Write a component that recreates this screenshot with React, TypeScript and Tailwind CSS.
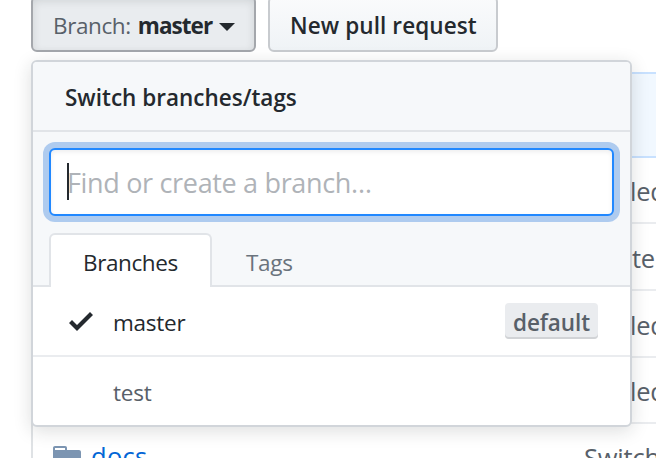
import React from "react";

const font = "font-['Open_Sans','Noto_Sans',sans-serif]";

function FileRow({ text, pad, height }: { text: string; pad: string; height: string }) {
  return (
    <div className={`flex items-center border-b-2 border-[#eaecef] pt-[3px] ${height} ${pad} text-[25.5px] tracking-[-0.3px] text-[#586069]`}>
      {text}
    </div>
  );
}

function FileTable() {
  return (
    <div className="ml-[31px] mt-[20px] w-[660px] border-l-2 border-[#dfe2e5]">
      <div className="h-[86px] border-y-2 border-[#c8e1ff] bg-[#f1f8ff]" />
      <FileRow text="led" pad="pl-[597px]" height="h-[66px]" />
      <FileRow text="te" pad="pl-[599px]" height="h-[67px]" />
      <FileRow text="led" pad="pl-[597px]" height="h-[67px]" />
      <FileRow text="led" pad="pl-[597px]" height="h-[66px]" />
      <div className="flex h-[67px] items-center pl-[20px] text-[25.5px]">
        <svg className="h-[32px] w-[28px] fill-[#7c95b2]" viewBox="0 0 14 16">
          <path d="M13 4H7V3c0-.66-.31-1-1-1H1c-.55 0-1 .45-1 1v10c0 .55.45 1 1 1h12c.55 0 1-.45 1-1V5c0-.55-.45-1-1-1zM6 4H1V3h5v1z" />
        </svg>
        <span className="ml-[10px] w-[493px] pb-[2px] tracking-[0.3px] text-[#0366d6]">docs</span>
        <span className="pb-px tracking-[-0.2px] text-[#586069]">Switch</span>
      </div>
    </div>
  );
}

function BranchMenu() {
  return (
    <div className="absolute left-[31px] top-[60px] flex h-[367px] w-[601px] flex-col overflow-visible rounded-[6px] border-2 border-[#d1d5da] bg-white text-[22.5px] text-[#24292e] shadow-[0_4px_18px_rgba(27,31,35,0.15)]">
      <div className="flex h-[70px] shrink-0 items-center rounded-t-[4px] border-b-2 border-[#e1e4e8] bg-[#f6f8fa] pl-8 pt-[3px] font-semibold">
        Switch branches/tags
      </div>
      <div className="flex h-[155px] shrink-0 flex-col border-b-2 border-[#e1e4e8] bg-[#f6f8fa] px-4 pt-4">
        <div className="flex h-[68px] w-[565px] shrink-0 items-center rounded-[6px] border-2 border-[#2188ff] bg-white pl-[16px] text-[27px] tracking-[-0.33px] text-[#afb3b8] shadow-[inset_0_2px_4px_rgba(27,31,35,0.075),0_0_0_6px_#aecbef]">
          <span className="h-[37px] w-[2px] shrink-0 -translate-y-px bg-[#24292e]" />
          <span className="-ml-[2px] whitespace-nowrap pt-[2px]">Find or create a branch…</span>
        </div>
        <div className="mt-[17px] flex h-[54px] shrink-0">
          <div className="flex w-[163px] items-center rounded-t-[6px] border-2 border-b-0 border-[#e1e4e8] bg-white pl-8 pt-[4px] tracking-[-0.4px]">
            Branches
          </div>
          <div className="flex items-center pl-[34px] pt-[6px] tracking-[-0.3px] text-[#6a737d]">Tags</div>
        </div>
      </div>
      <div className="flex h-[70px] shrink-0 items-center border-b-2 border-[#eaecef] pl-[36px] pr-8">
        <svg className="h-8 w-6 fill-[#24292e]" viewBox="0 0 12 16">
          <path d="M12 5l-8 8-4-4 1.5-1.5L4 10l6.5-6.5L12 5z" />
        </svg>
        <span className="ml-5 grow pt-[4px] tracking-[-0.25px]">master</span>
        <span className="flex h-[36px] w-[93px] items-center justify-center rounded-[4px] bg-[#eaecef] pt-[3px] font-semibold tracking-[-0.1px] text-[#586069] shadow-[inset_0_-2px_0_#d1d3d6]">
          default
        </span>
      </div>
      <div className="flex grow items-center pl-[80px] pt-[4px] tracking-[-0.25px] text-[#586069]">test</div>
    </div>
  );
}

export default function App() {
  return (
    <div className={`relative h-[458px] w-[656px] overflow-hidden bg-white ${font}`}>
      <div className="flex h-[52px] gap-3 pl-[31px] text-[22.5px] text-[#24292e]">
        <div className="-mt-[4px] flex h-[56px] w-[225px] items-center rounded-[6px] border-2 border-[#a4a7ac] bg-[#e9ecef] pl-5 pt-[3px] shadow-[inset_0_3px_8px_rgba(27,31,35,0.12)]">
          <span className="tracking-[-0.4px] text-[#586069]">Branch:</span>
          <span className="ml-[7px] font-bold tracking-[-0.95px]">master</span>
          <span className="ml-[7px] mt-[3px] border-x-8 border-t-8 border-x-transparent border-t-[#24292e]" />
        </div>
        <div className="-mt-[4px] flex h-[56px] w-[230px] items-center rounded-[6px] border-2 border-[#c8cbcf] bg-linear-to-b from-[#fafbfc] to-[#eff3f6] pl-5 pt-[3px] font-semibold tracking-[0.1px]">
          New pull request
        </div>
      </div>
      <FileTable />
      <BranchMenu />
    </div>
  );
}
